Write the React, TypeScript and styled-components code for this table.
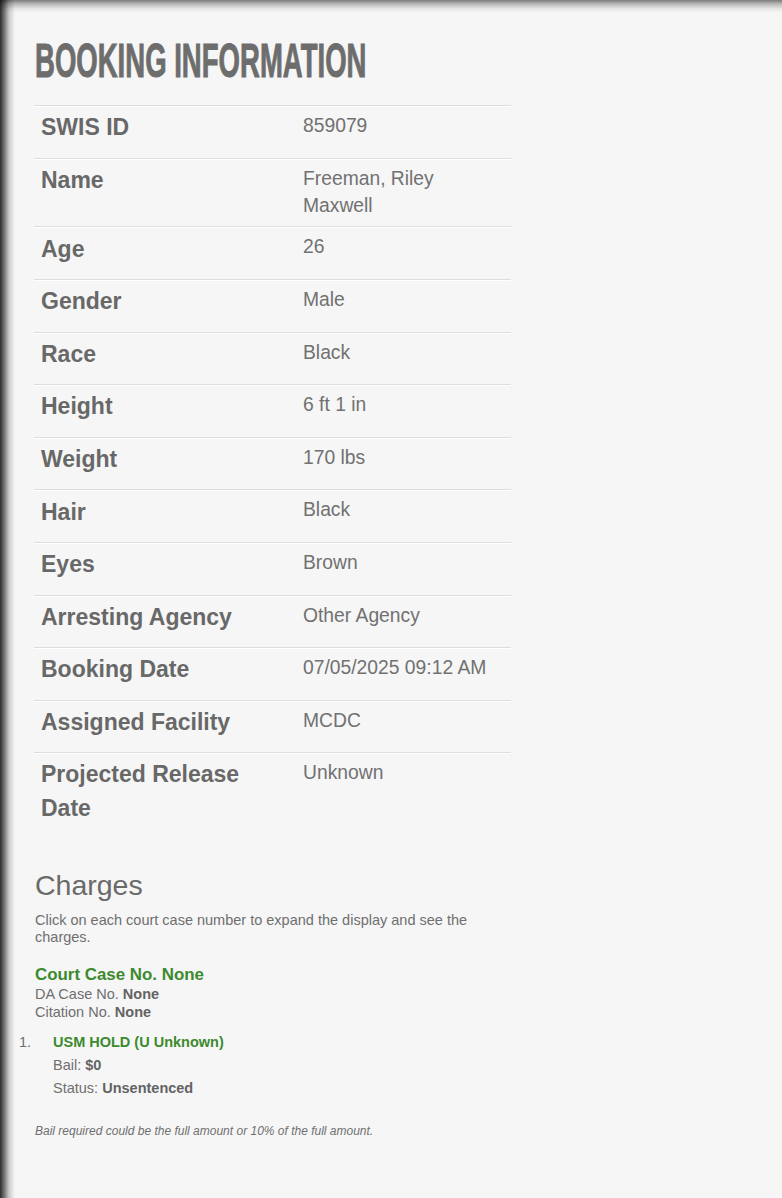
import React from "react";
import styled, { createGlobalStyle } from "styled-components";

const GlobalStyle = createGlobalStyle`
  html, body {
    margin: 0;
    padding: 0;
    background: #f6f6f6;
  }
  body {
    font-family: "Liberation Sans", Arial, Helvetica, sans-serif;
  }
`;

const Page = styled.div`
  min-height: 1198px;
  box-sizing: border-box;
  padding: 36px 0 40px 35px;
  background-color: #f6f6f6;
  background-image: linear-gradient(
      to right,
      rgba(0, 0, 0, 0.82) 0px,
      rgba(0, 0, 0, 0.55) 4px,
      rgba(0, 0, 0, 0.18) 9px,
      rgba(0, 0, 0, 0) 15px
    ),
    linear-gradient(
      to bottom,
      rgba(0, 0, 0, 0.5) 0px,
      rgba(0, 0, 0, 0.25) 4px,
      rgba(0, 0, 0, 0.06) 9px,
      rgba(0, 0, 0, 0) 13px
    );
  background-repeat: no-repeat;
`;

const Title = styled.h1`
  margin: 0 0 20px;
  display: inline-block;
  font-size: 49px;
  line-height: 49px;
  font-weight: 700;
  color: #6d6d6d;
  white-space: nowrap;
  transform: scaleX(0.562);
  transform-origin: left center;
  -webkit-text-stroke: 1px #6d6d6d;
`;

const Table = styled.div`
  width: 477px;
  margin-left: -1px;
`;

const Row = styled.div`
  display: flex;
  border-top: 1px solid #dddddd;
  box-shadow: inset 0 1px 0 #ffffff;
`;

const Label = styled.div`
  flex: 0 0 262px;
  box-sizing: border-box;
  padding: 5.2px 7px 13.1px;
  font-size: 23px;
  line-height: 33.3px;
  font-weight: 700;
  color: #686868;
`;

const Value = styled.div`
  flex: 1;
  padding: 6px 7px 6.5px;
  font-size: 19.3px;
  line-height: 27.7px;
  color: #717171;
`;

const Section = styled.h2`
  margin: 31px 0 11px;
  font-size: 28.5px;
  line-height: 32px;
  font-weight: 400;
  color: #6a6a6a;
`;

const Intro = styled.p`
  margin: 0 0 18px;
  width: 470px;
  font-size: 14.5px;
  line-height: 17px;
  color: #6f6f6f;
`;

const CaseTitle = styled.div`
  font-size: 16.9px;
  line-height: 21px;
  font-weight: 700;
  color: #3c8a2e;
`;

const Meta = styled.div`
  font-size: 14.5px;
  line-height: 18.3px;
  color: #6f6f6f;

  b {
    color: #636363;
  }
`;

const ChargeList = styled.ol`
  list-style: none;
  margin: 9px 0 0 -16px;
  padding: 0;
`;

const Charge = styled.li`
  display: flex;
  font-size: 14.5px;
  line-height: 23px;
  color: #6f6f6f;
`;

const Num = styled.span`
  flex: 0 0 34px;
`;

const ChargeName = styled.div`
  font-weight: 700;
  color: #3c8a2e;
`;

const ChargeLine = styled.div`
  b {
    color: #636363;
  }
`;

const Note = styled.p`
  margin: 24px 0 0;
  font-size: 12px;
  line-height: 15px;
  font-style: italic;
  color: #6f6f6f;
`;

const rows: [string, string][] = [
  ["SWIS ID", "859079"],
  ["Name", "Freeman, Riley Maxwell"],
  ["Age", "26"],
  ["Gender", "Male"],
  ["Race", "Black"],
  ["Height", "6 ft 1 in"],
  ["Weight", "170 lbs"],
  ["Hair", "Black"],
  ["Eyes", "Brown"],
  ["Arresting Agency", "Other Agency"],
  ["Booking Date", "07/05/2025 09:12 AM"],
  ["Assigned Facility", "MCDC"],
  ["Projected Release Date", "Unknown"],
];

const App: React.FC = () => {
  return (
    <>
      <GlobalStyle />
      <Page>
        <Title>BOOKING INFORMATION</Title>
        <Table>
          {rows.map(([label, value]) => (
            <Row key={label}>
              <Label>{label}</Label>
              <Value>{value}</Value>
            </Row>
          ))}
        </Table>

        <Section>Charges</Section>
        <Intro>
          Click on each court case number to expand the display and see the
          charges.
        </Intro>

        <CaseTitle>Court Case No. None</CaseTitle>
        <Meta>
          DA Case No. <b>None</b>
        </Meta>
        <Meta>
          Citation No. <b>None</b>
        </Meta>

        <ChargeList>
          <Charge>
            <Num>1.</Num>
            <div>
              <ChargeName>USM HOLD (U Unknown)</ChargeName>
              <ChargeLine>
                Bail: <b>$0</b>
              </ChargeLine>
              <ChargeLine>
                Status: <b>Unsentenced</b>
              </ChargeLine>
            </div>
          </Charge>
        </ChargeList>

        <Note>Bail required could be the full amount or 10% of the full amount.</Note>
      </Page>
    </>
  );
};

export default App;
